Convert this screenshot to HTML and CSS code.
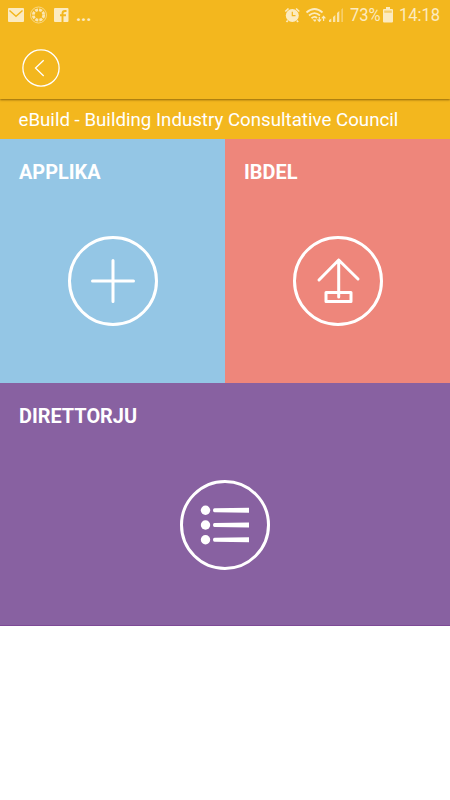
FILE: index.html
```html
<!DOCTYPE html>
<html lang="mt">
<head>
<meta charset="utf-8">
<title>eBuild</title>
<link rel="stylesheet" href="styles.css">
</head>
<body>
<header class="appbar">
  <div class="status">
    <svg class="notifications" width="72" height="30" viewBox="0 0 72 30">
      <rect x="8" y="8" width="16" height="14" rx="1" fill="#fcebc0"/>
      <path d="M9.500 10.500L16 16.300L22.500 10.500" fill="none" stroke="#f3b71e" stroke-width="1.500"/>
      <circle cx="38.500" cy="15" r="8" fill="none" stroke="#fadf9c" stroke-width=".8"/>
      <circle cx="38.500" cy="15" r="5.200" fill="none" stroke="#fbe6b1" stroke-width="2.800" stroke-dasharray="3 1.080"/>
      <rect x="54" y="8" width="14.500" height="14" rx="1" fill="#fcebc0"/>
      <path d="M62.500 22V13.500Q62.500 11 65 11H66.500M60 15.300H66" fill="none" stroke="#f3b71e" stroke-width="1.900"/>
    </svg>
    <span class="more">...</span>
    <svg class="signals" width="62" height="30" viewBox="284 0 62 30">
      <circle cx="293.300" cy="15.500" r="6.500" fill="#fcebc0"/>
      <path d="M286.300 11.500L289.500 8.500M300.300 11.500L297.100 8.500M288.800 20.500L287.500 22M297.800 20.500L299.100 22" stroke="#fcebc0" stroke-width="1.700"/>
      <path d="M293.300 11.700V15.700H296.500" fill="none" stroke="#f3b71e" stroke-width="1.200"/>
      <path d="M307.500 12.500Q315.500 5.500 323.500 12.500M310 15.500Q315.500 10.700 321 15.500M312.500 18.300Q315.500 15.700 318 18" fill="none" stroke="#fcebc0" stroke-width="1.800"/>
      <path d="M313.500 19.500L316 22L317.500 19.500Z" fill="#fcebc0"/>
      <path d="M320.300 17V21M318.500 19.300L320.300 21.300L322.100 19.300M324.600 21V16.500M322.800 18.300L324.600 16.300L326.400 18.300" fill="none" stroke="#fcebc0" stroke-width="1.200"/>
      <path d="M330 22V20L332.300 18.500V22ZM334 22V17L336.300 15V22ZM338 22V13L340.300 11V22Z" fill="#fbe4aa"/>
      <path d="M342.300 22V9.500L344 8V22Z" fill="#f7ce68"/>
    </svg>
    <span class="percent"><span class="condensed">73%</span></span>
    <svg class="battery" width="10" height="30" viewBox="0 0 10 30">
      <path d="M3 7H7V9H9Q10 9 10 10V21.500Q10 22.500 9 22.500H1Q0 22.500 0 21.500V10Q0 9 1 9H3Z" fill="#fcebc0"/>
      <rect x="1.200" y="10.500" width="7.600" height="2.300" fill="#f7cf6b"/>
    </svg>
    <span class="clock"><span class="condensed">14:18</span></span>
  </div>
  <svg class="back" width="38" height="38" viewBox="0 0 38 38">
    <circle cx="19" cy="19" r="18.100" fill="none" stroke="#fff" stroke-width="1.300"/>
    <path d="M21.700 11.200L13.500 19L21.700 27" fill="none" stroke="#fff" stroke-width="1.300"/>
  </svg>
</header>
<main>
  <h1 class="title">eBuild - Building Industry Consultative Council</h1>
  <div class="tiles">
    <section class="tile apply">
      <h2 class="label">APPLIKA</h2>
      <svg class="icon" width="90" height="90" viewBox="0 0 90 90">
        <circle cx="45" cy="45" r="43.500"/>
        <path d="M45 24.500V65.500M24.500 45H65.500"/>
      </svg>
    </section>
    <section class="tile change">
      <h2 class="label">IBDEL</h2>
      <svg class="icon" width="90" height="90" viewBox="0 0 90 90">
        <circle cx="45" cy="45" r="43.500"/>
        <path d="M45.700 61V24L26 44M45.700 24L65 43"/>
        <rect x="33" y="56.500" width="25" height="9"/>
      </svg>
    </section>
    <section class="tile directory">
      <h2 class="label">DIRETTORJU</h2>
      <svg class="icon" width="90" height="90" viewBox="0 0 90 90">
        <circle cx="45" cy="45" r="43.500"/>
        <g class="solid">
          <circle cx="25.500" cy="30.200" r="4.700"/>
          <circle cx="25.500" cy="45" r="4.700"/>
          <circle cx="25.500" cy="59.800" r="4.700"/>
          <path d="M69 27.700V32.700L34.500 32.200Q33 32 33 30.200T34.500 28.200ZM69 42.500V47.500L34.500 47Q33 46.800 33 45T34.500 43ZM69 57.300V62.300L34.500 61.800Q33 61.600 33 59.800T34.500 57.800Z"/>
        </g>
      </svg>
    </section>
  </div>
</main>
</body>
</html>
```
FILE: styles.css
```css
* { box-sizing: border-box; }
body {
  margin: 0;
  background: #fff;
  color: #fff;
  font-family: Roboto, "Liberation Sans", sans-serif;
}
h1, h2 { margin: 0; }
svg { display: block; flex: none; }
.appbar {
  position: relative;
  height: 99px;
  background: #f3b71e;
  box-shadow: 0 1px 2px rgba(90, 60, 0, .65);
}
.status {
  display: flex;
  height: 30px;
  margin-bottom: 19px;
  color: #fcebc0;
  font-size: 18.500px;
  line-height: 31px;
}
.more { margin-left: 4px; font-weight: 700; letter-spacing: -.3px; }
.signals { margin-left: auto; }
.percent { width: 30px; margin-left: 5px; }
.battery { margin-left: 3px; }
.clock { width: 42px; margin: 0 9px 0 6px; }
.condensed {
  display: inline-block;
  transform: scaleX(.89);
  transform-origin: left;
}
.back { margin-left: 21.500px; }
.title {
  height: 40px;
  padding-left: 18.500px;
  background: #f3b71e;
  font-size: 18.700px;
  font-weight: 400;
  line-height: 42px;
  white-space: nowrap;
}
.tiles {
  display: grid;
  grid-template-columns: 1fr 1fr;
  grid-template-rows: 244px 243px;
}
.tile {
  display: flex;
  flex-direction: column;
  align-items: center;
}
.apply { background: #94c6e5; }
.change { background: #ee867b; }
.directory {
  grid-column: span 2;
  background: #8861a1;
  border-bottom: 1px solid #7d4996;
}
.label {
  align-self: stretch;
  height: 97px;
  padding: 21px 0 0 19px;
  font-size: 19.900px;
  font-weight: 700;
  line-height: 25px;
}
.icon {
  fill: none;
  stroke: #fff;
  stroke-width: 3;
  stroke-linecap: round;
  stroke-linejoin: round;
}
.solid { fill: #fff; stroke: none; }
```
